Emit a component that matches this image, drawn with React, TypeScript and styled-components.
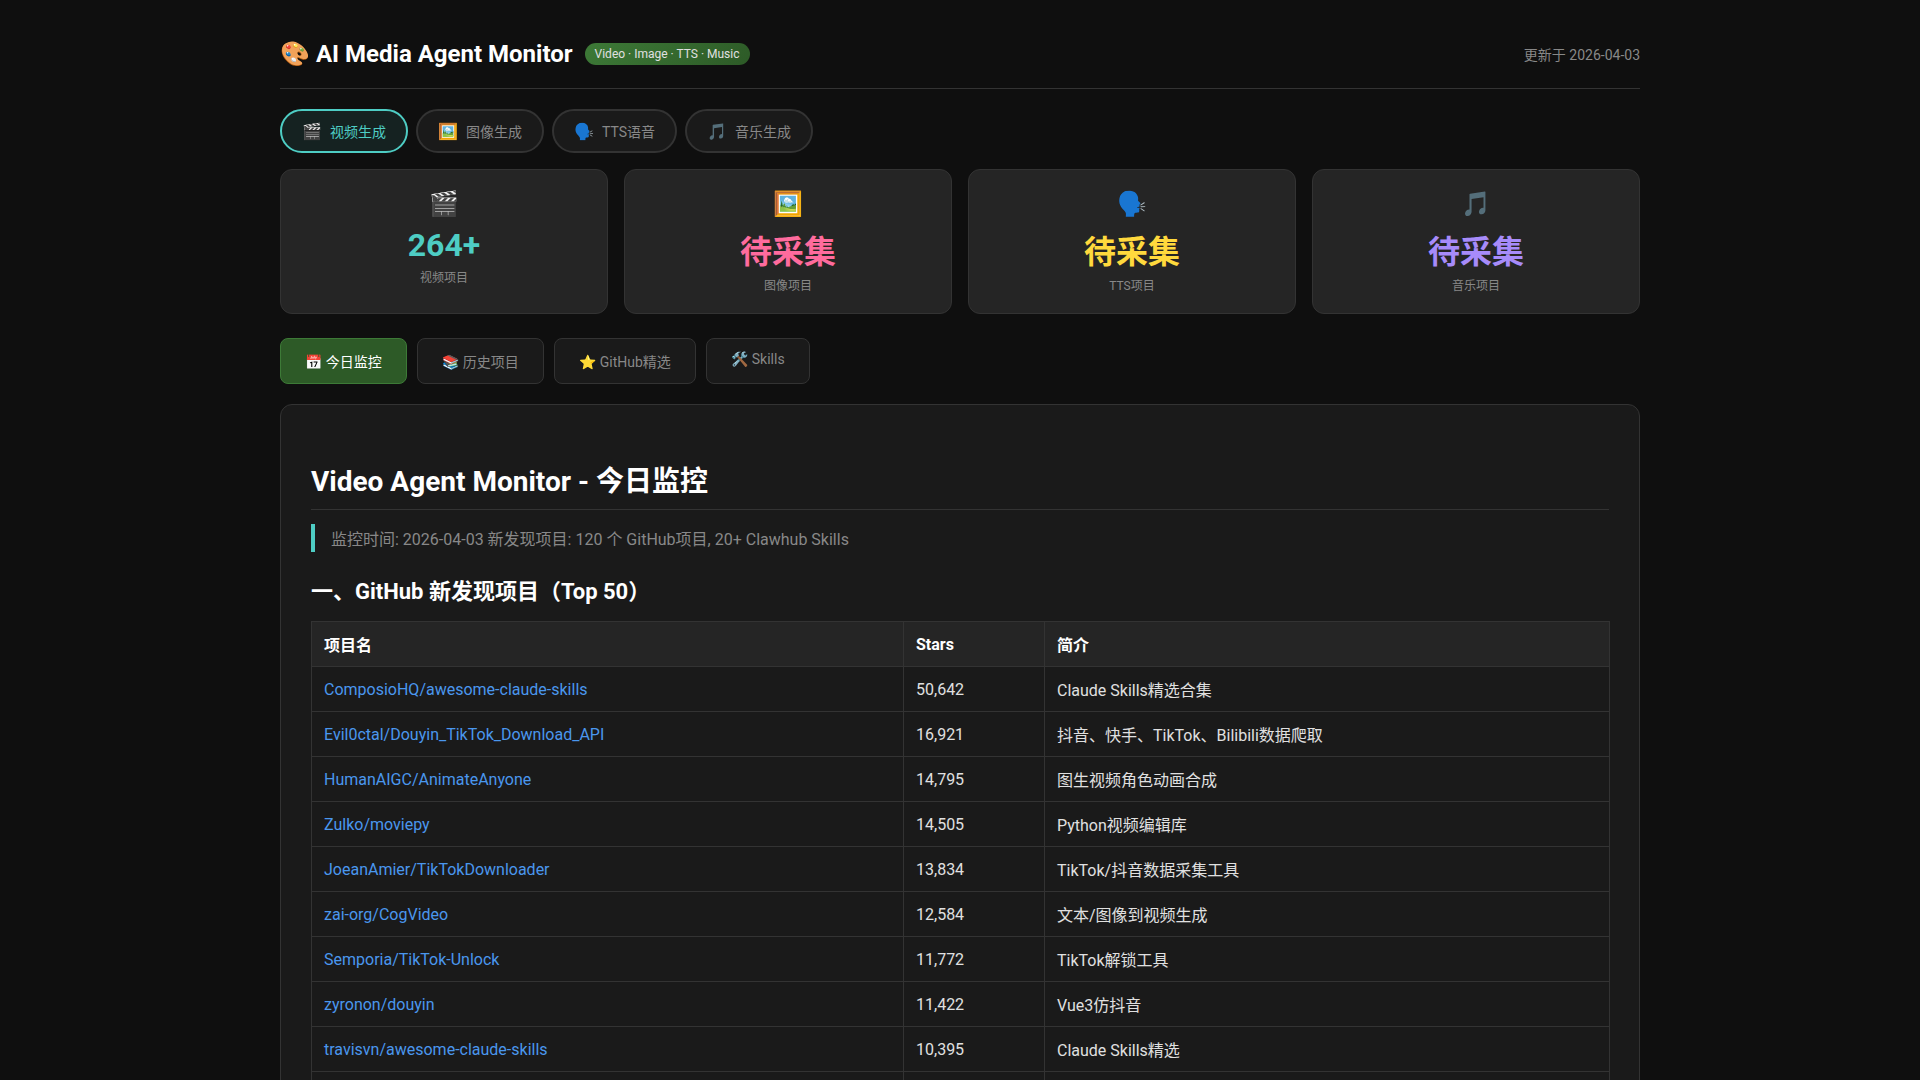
import React from "react";
import styled, { createGlobalStyle } from "styled-components";

const Global = createGlobalStyle`
  html, body { margin: 0; padding: 0; height: 1080px; overflow: hidden; background: #0f0f0f; }
  body { font-family: Roboto, "Noto Sans CJK SC", sans-serif; color: #e0e0e0; }
  * { box-sizing: border-box; }
`;

const Page = styled.div`
  max-width: 1400px;
  margin: 0 auto;
  padding: 20px;
`;
const Header = styled.header`
  display: flex;
  justify-content: space-between;
  align-items: center;
  height: 69px;
  padding-bottom: 1px;
  border-bottom: 1px solid #333;
  margin-bottom: 20px;
`;
const TitleGroup = styled.div`
  display: flex;
  align-items: center;
  gap: 12px;
`;
const Title = styled.h1`
  margin: 0;
  font-size: 24px;
  font-weight: 700;
  color: #fff;
`;
const Badge = styled.span`
  background: linear-gradient(135deg, #3d7a37, #2d5a27);
  color: #e0e0e0;
  font-size: 12px;
  padding: 4px 11px 4px 10px;
  border-radius: 12px;
`;
const Updated = styled.span`
  font-size: 14px;
  color: #888;
`;
const PillRow = styled.nav`
  display: flex;
  gap: 8px;
  margin-bottom: 16px;
`;
const Pill = styled.button<{ $active?: boolean }>`
  display: flex;
  align-items: center;
  gap: 8px;
  height: 44px;
  padding: 0 20px;
  border-radius: 24px;
  border: 2px solid ${(p) => (p.$active ? "#4ecdc4" : "#333")};
  background: ${(p) => (p.$active ? "#152221" : "#1a1a1a")};
  color: ${(p) => (p.$active ? "#4ecdc4" : "#888")};
  font: inherit;
  font-size: 14px;
`;
const PillIcon = styled.span`
  font-size: 16px;
`;
const StatGrid = styled.section`
  display: grid;
  grid-template-columns: repeat(4, 1fr);
  gap: 16px;
  margin-bottom: 24px;
`;
const StatCard = styled.div`
  background: #252525;
  border: 1px solid #333;
  border-radius: 12px;
  padding: 20px;
  text-align: center;
`;
const StatIcon = styled.div`
  font-size: 24px;
  margin-bottom: 8px;
`;
const StatValue = styled.div<{ $color: string }>`
  font-size: 32px;
  font-weight: 700;
  color: ${(p) => p.$color};
`;
const StatLabel = styled.div`
  font-size: 12px;
  color: #888;
  margin-top: 4px;
`;
const SubTabs = styled.nav`
  display: flex;
  gap: 10px;
  margin-bottom: 20px;
`;
const SubTab = styled.a<{ $active?: boolean }>`
  display: block;
  padding: 12px 24.25px;
  border-radius: 8px;
  border: 1px solid ${(p) => (p.$active ? "#3d7a37" : "#333")};
  background: ${(p) => (p.$active ? "#2d5a27" : "#1a1a1a")};
  color: ${(p) => (p.$active ? "#fff" : "#888")};
  font-size: 14px;
`;
const Content = styled.main`
  background: #1a1a1a;
  border: 1px solid #333;
  border-radius: 12px;
  padding: 30px;
`;
const Heading = styled.h1`
  margin: 24px 0 14px;
  font-size: 28px;
  font-weight: 700;
  color: #fff;
  padding-bottom: 10px;
  border-bottom: 1px solid #333;
`;
const Quote = styled.blockquote`
  margin: 0;
  padding: 2px 0 2px 16px;
  border-left: 4px solid #4ecdc4;
  color: #888;
  font-size: 16px;
`;
const SectionTitle = styled.h2`
  margin: 21px 0 16px;
  font-size: 22px;
  font-weight: 700;
  color: #fff;
`;
const Table = styled.table`
  width: 100%;
  table-layout: fixed;
  border-collapse: collapse;
`;
const Col = styled.col<{ $w: number }>`
  width: ${(p) => p.$w}px;
`;
const Th = styled.th`
  background: #252525;
  color: #fff;
  font-weight: 700;
  font-size: 16px;
  text-align: left;
  padding: 10px 12px;
  border: 1px solid #333;
`;
const Td = styled.td`
  font-size: 16px;
  color: #e0e0e0;
  padding: 10px 12px;
  height: 45px;
  border: 1px solid #333;
`;
const RepoLink = styled.a`
  color: #4a97ee;
  text-decoration: none;
`;

const pills = [
  { icon: "🎬", label: "视频生成", active: true },
  { icon: "🖼️", label: "图像生成" },
  { icon: "🗣️", label: "TTS语音" },
  { icon: "🎵", label: "音乐生成" },
];
const stats = [
  { icon: "🎬", value: "264+", label: "视频项目", color: "#4ecdc4" },
  { icon: "🖼️", value: "待采集", label: "图像项目", color: "#ff6b9d" },
  { icon: "🗣️", value: "待采集", label: "TTS项目", color: "#ffd93d" },
  { icon: "🎵", value: "待采集", label: "音乐项目", color: "#a78bfa" },
];
const tabs = ["📅 今日监控", "📚 历史项目", "⭐ GitHub精选", "🛠️ Skills"];
const rows = [
  ["ComposioHQ/awesome-claude-skills", "50,642", "Claude Skills精选合集"],
  ["Evil0ctal/Douyin_TikTok_Download_API", "16,921", "抖音、快手、TikTok、Bilibili数据爬取"],
  ["HumanAIGC/AnimateAnyone", "14,795", "图生视频角色动画合成"],
  ["Zulko/moviepy", "14,505", "Python视频编辑库"],
  ["JoeanAmier/TikTokDownloader", "13,834", "TikTok/抖音数据采集工具"],
  ["zai-org/CogVideo", "12,584", "文本/图像到视频生成"],
  ["Semporia/TikTok-Unlock", "11,772", "TikTok解锁工具"],
  ["zyronon/douyin", "11,422", "Vue3仿抖音"],
  ["travisvn/awesome-claude-skills", "10,395", "Claude Skills精选"],
];

export default function App() {
  return (
    <Page>
      <Global />
      <Header>
        <TitleGroup>
          <Title>🎨 AI Media Agent Monitor</Title>
          <Badge>Video · Image · TTS · Music</Badge>
        </TitleGroup>
        <Updated>更新于 2026-04-03</Updated>
      </Header>
      <PillRow>
        {pills.map((p) => (
          <Pill key={p.label} $active={p.active}>
            <PillIcon>{p.icon}</PillIcon>
            {p.label}
          </Pill>
        ))}
      </PillRow>
      <StatGrid>
        {stats.map((s) => (
          <StatCard key={s.label}>
            <StatIcon>{s.icon}</StatIcon>
            <StatValue $color={s.color}>{s.value}</StatValue>
            <StatLabel>{s.label}</StatLabel>
          </StatCard>
        ))}
      </StatGrid>
      <SubTabs>
        {tabs.map((t, i) => (
          <SubTab key={t} $active={i === 0}>{t}</SubTab>
        ))}
      </SubTabs>
      <Content>
        <Heading>Video Agent Monitor - 今日监控</Heading>
        <Quote>监控时间: 2026-04-03 新发现项目: 120 个 GitHub项目, 20+ Clawhub Skills</Quote>
        <SectionTitle>一、GitHub 新发现项目（Top 50）</SectionTitle>
        <Table>
          <colgroup>
            <Col $w={592} />
            <Col $w={141} />
            <Col $w={565} />
          </colgroup>
          <thead>
            <tr>
              <Th>项目名</Th>
              <Th>Stars</Th>
              <Th>简介</Th>
            </tr>
          </thead>
          <tbody>
            {rows.map((r) => (
              <tr key={r[0]}>
                <Td><RepoLink href="#">{r[0]}</RepoLink></Td>
                <Td>{r[1]}</Td>
                <Td>{r[2]}</Td>
              </tr>
            ))}
            <tr>
              <Td />
              <Td />
              <Td />
            </tr>
          </tbody>
        </Table>
      </Content>
    </Page>
  );
}
